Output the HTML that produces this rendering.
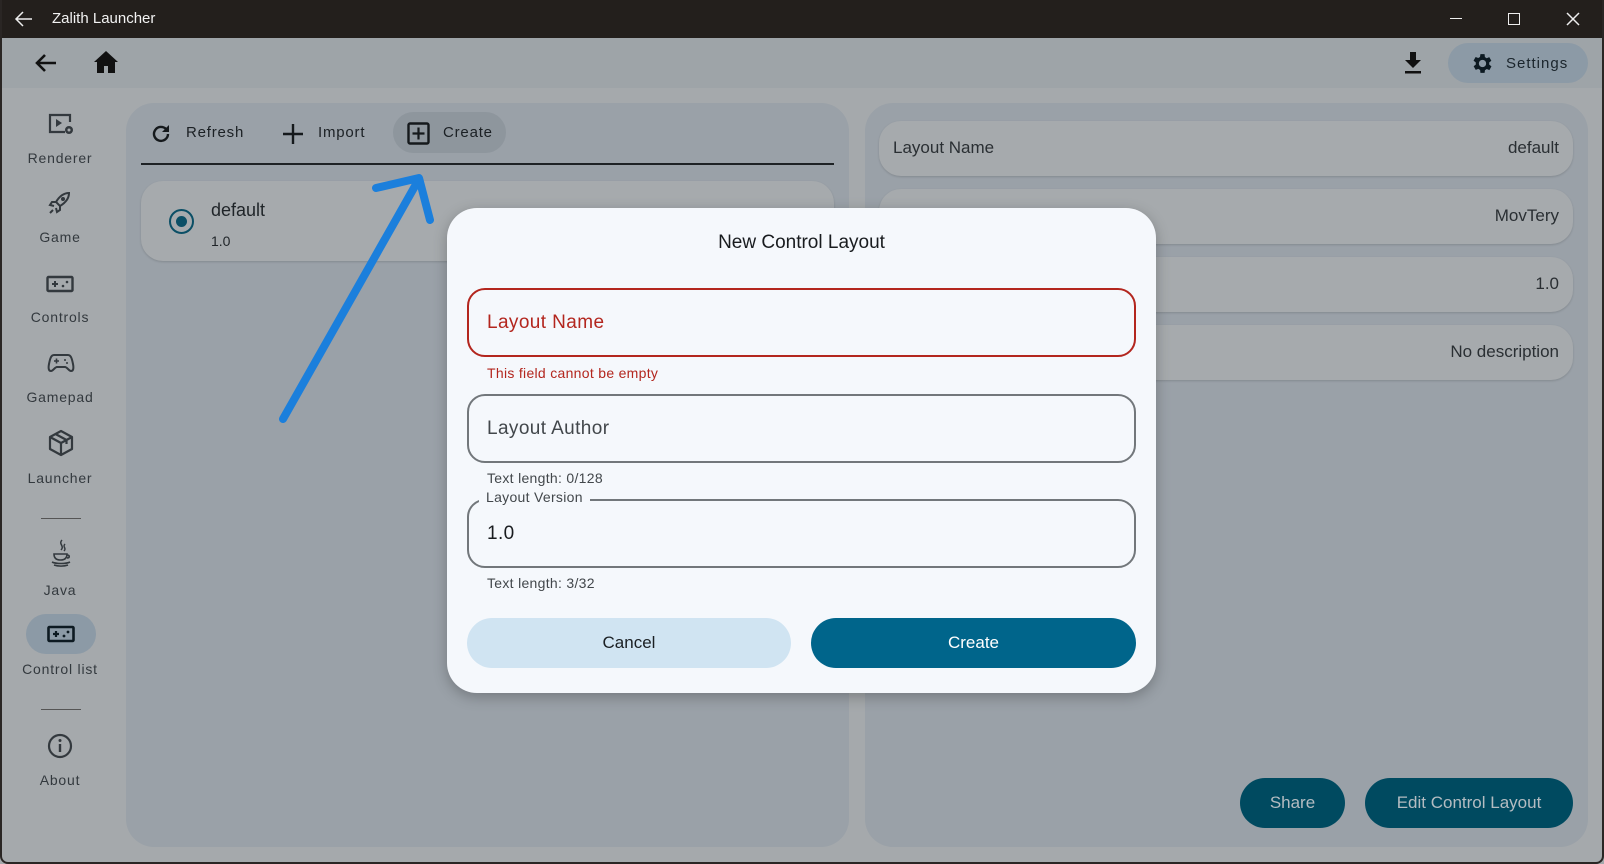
<!DOCTYPE html>
<html><head><meta charset="utf-8"><style>
*{box-sizing:border-box;margin:0;padding:0}
body{width:1604px;height:864px;overflow:hidden;background:#a5a9ac;font-family:"Liberation Sans",sans-serif;position:relative;color:#2a2f33}
.abs{position:absolute}
.title{left:0;top:0;width:1604px;height:38px;background:#231f1c;color:#f2f2f2;font-size:15px}
.topbar{left:0;top:38px;width:1604px;height:50px;background:#9ea4a8}
.nav{width:100px;left:10px;text-align:center;font-size:14px;letter-spacing:.8px;color:#33393e}
.panel{background:#9aa1a8;border-radius:28px}
.row{left:879px;width:694px;height:55px;background:#a6aaad;border-radius:22px;box-shadow:0 1px 2px rgba(0,0,0,.15);font-size:17px;color:#2a2f33}
.row span{position:absolute;right:14px;top:17px}
.dlg{left:447px;top:208px;width:709px;height:485px;background:#f5f8fc;border-radius:30px;box-shadow:0 4px 14px rgba(0,0,0,.25)}
.field{position:absolute;left:20px;width:669px;height:69px;border:2px solid #72777b;border-radius:18px;font-size:19px;color:#42474b;padding:22px 0 0 18px;letter-spacing:.4px}
.help{position:absolute;left:40px;font-size:14px;color:#42474b;letter-spacing:.3px}
.btn{position:absolute;height:50px;border-radius:25px;text-align:center;line-height:50px;font-size:17px}
.frame{left:0;top:0;width:1604px;height:864px;border:2px solid #2a2624;border-top:none;border-radius:0 0 8px 8px;pointer-events:none}
</style></head><body>
<div class="abs title">
<svg class="abs" style="left:14px;top:10px" width="20" height="18" viewBox="0 0 20 18"><path d="M18 9H3M9 2L2 9l7 7" stroke="#eee" stroke-width="1.5" fill="none"/></svg>
<div class="abs" style="left:52px;top:10px">Zalith Launcher</div>
<div class="abs" style="left:1450px;top:18px;width:12px;height:1px;background:#eee"></div>
<div class="abs" style="left:1508px;top:13px;width:12px;height:12px;border:1.5px solid #eee"></div>
<svg class="abs" style="left:1566px;top:12px" width="14" height="14"><path d="M1 1L13 13M13 1L1 13" stroke="#eee" stroke-width="1.5"/></svg>
</div>
<div class="abs topbar">
<svg class="abs" style="left:34px;top:14px" width="24" height="22" viewBox="0 0 24 22"><path d="M22 11H4M11 3L3 11l8 8" stroke="#111" stroke-width="2.6" fill="none"/></svg>
<svg class="abs" style="left:93px;top:12px" width="26" height="24" viewBox="0 0 26 24"><path d="M13 1L1 12h3v11h7v-7h4v7h7V12h3z" fill="#111"/></svg>
<svg class="abs" style="left:1402px;top:13px" width="22" height="24" viewBox="0 0 22 24"><path d="M8 1h6v8h5l-8 8-8-8h5z" fill="#111"/><rect x="3" y="20" width="16" height="2.5" fill="#111"/></svg>
<div class="abs" style="left:1448px;top:5px;width:140px;height:40px;background:#8c9aa6;border-radius:20px">
<svg class="abs" style="left:22px;top:8px" width="25" height="25" viewBox="0 0 24 24"><path fill="#0d1a22" d="M19.4 13a7.5 7.5 0 000-2l2.1-1.6-2-3.5-2.5 1a7 7 0 00-1.7-1L15 3h-4l-.4 2.7a7 7 0 00-1.7 1l-2.5-1-2 3.5L6.6 11a7.5 7.5 0 000 2l-2.1 1.6 2 3.5 2.5-1a7 7 0 001.7 1L11 21h4l.4-2.7a7 7 0 001.7-1l2.5 1 2-3.5zM13 15.5a3.5 3.5 0 110-7 3.5 3.5 0 010 7z" transform="translate(-1 0)"/></svg>
<div class="abs" style="left:58px;top:12px;font-size:15px;letter-spacing:1px;color:#1b252c">Settings</div>
</div>
</div>

<svg class="abs" style="left:47px;top:112px" width="28" height="26" viewBox="0 0 28 26"><path d="M18 20H3V3h20v7" stroke="#33393e" stroke-width="2.2" fill="none"/><path d="M9 7v8l6-4z" fill="#33393e"/><circle cx="22" cy="18" r="4" fill="#33393e"/><circle cx="22" cy="18" r="1.5" fill="#a5a9ac"/></svg>
<div class="abs nav" style="top:150px">Renderer</div>
<svg class="abs" style="left:47px;top:190px" width="26" height="26" viewBox="0 0 26 26"><path d="M22 3c-6 0-10 4-13 9l4 4c5-3 9-7 9-13zM9 12l-4 0-2 3 4 1M13 16v4l-3 2-1-4M6 20l-3 3" stroke="#33393e" stroke-width="2" fill="none"/><circle cx="16" cy="9" r="2" fill="#33393e"/></svg>
<div class="abs nav" style="top:229px">Game</div>
<svg class="abs" style="left:46px;top:275px" width="28" height="18" viewBox="0 0 28 18"><rect x="1.5" y="2" width="25" height="14" rx="1" stroke="#33393e" stroke-width="2.4" fill="none"/><path d="M6 9h6M9 6v6" stroke="#33393e" stroke-width="2"/><circle cx="17" cy="11" r="1.3" fill="#33393e"/><circle cx="21" cy="7" r="1.3" fill="#33393e"/></svg>
<div class="abs nav" style="top:309px">Controls</div>
<svg class="abs" style="left:47px;top:352px" width="28" height="22" viewBox="0 0 28 22"><path d="M7 3h14c3 0 4 4 5 9s0 7-2 7-4-4-6-4h-8c-2 0-4 4-6 4s-3-2-2-7 2-9 5-9z" stroke="#33393e" stroke-width="2" fill="none"/><path d="M7 9h5M9.5 6.5v5" stroke="#33393e" stroke-width="1.6"/><circle cx="18" cy="8" r="1" fill="#33393e"/><circle cx="20" cy="11" r="1" fill="#33393e"/></svg>
<div class="abs nav" style="top:389px">Gamepad</div>
<svg class="abs" style="left:47px;top:429px" width="28" height="28" viewBox="0 0 28 28"><path d="M14 2l11 6v12l-11 6-11-6V8zM3 8l11 6 11-6M14 14v12M8.5 5l11 6v4" stroke="#33393e" stroke-width="2.2" fill="none" stroke-linejoin="round"/></svg>
<div class="abs nav" style="top:470px">Launcher</div>
<div class="abs" style="left:41px;top:518px;width:40px;height:1px;background:#555"></div>
<svg class="abs" style="left:49px;top:539px" width="24" height="30" viewBox="0 0 24 30"><path d="M13 1c-4 4 3 6-1 10M16 5c-3 3 2 4-1 7" stroke="#33393e" stroke-width="1.5" fill="none"/><path d="M5 15h13c0 4-2 6-6.5 6S5 19 5 15zM18 16c3 0 3 3 0 3M3 23c4 2 14 2 18 0M5 26c4 1.5 10 1.5 14 0" stroke="#33393e" stroke-width="1.6" fill="none"/></svg>
<div class="abs nav" style="top:582px">Java</div>
<div class="abs" style="left:26px;top:614px;width:70px;height:40px;background:#8c9aa6;border-radius:20px"></div>
<svg class="abs" style="left:47px;top:625px" width="28" height="18" viewBox="0 0 28 18"><rect x="1.5" y="2" width="25" height="14" rx="1" stroke="#0d1a22" stroke-width="2.6" fill="none"/><path d="M6 9h6M9 6v6" stroke="#0d1a22" stroke-width="2.2"/><circle cx="17" cy="11" r="1.4" fill="#0d1a22"/><circle cx="21" cy="7" r="1.4" fill="#0d1a22"/></svg>
<div class="abs nav" style="top:661px;left:8px;width:104px">Control list</div>
<div class="abs" style="left:41px;top:709px;width:40px;height:1px;background:#555"></div>
<svg class="abs" style="left:47px;top:733px" width="26" height="26" viewBox="0 0 26 26"><circle cx="13" cy="13" r="11" stroke="#33393e" stroke-width="2.2" fill="none"/><path d="M13 11v8" stroke="#33393e" stroke-width="2.4"/><circle cx="13" cy="7.5" r="1.5" fill="#33393e"/></svg>
<div class="abs nav" style="top:772px">About</div>

<div class="abs panel" style="left:126px;top:103px;width:723px;height:744px"></div>
<svg class="abs" style="left:149px;top:122px" width="24" height="24" viewBox="0 0 24 24"><path d="M19 12a7 7 0 11-2-5" stroke="#15191c" stroke-width="2.4" fill="none"/><path d="M20 3v7h-7z" fill="#15191c"/></svg>
<div class="abs" style="left:186px;top:124px;font-size:15px;letter-spacing:.8px;color:#1b2024">Refresh</div>
<svg class="abs" style="left:282px;top:123px" width="22" height="22"><path d="M11 1v20M1 11h20" stroke="#15191c" stroke-width="2.4"/></svg>
<div class="abs" style="left:318px;top:124px;font-size:15px;letter-spacing:.8px;color:#1b2024">Import</div>
<div class="abs" style="left:393px;top:112px;width:113px;height:41px;background:#8e969d;border-radius:21px"></div>
<svg class="abs" style="left:407px;top:122px" width="23" height="23" viewBox="0 0 23 23"><rect x="1.5" y="1.5" width="20" height="20" rx="1.5" stroke="#15191c" stroke-width="2.4" fill="none"/><path d="M11.5 5.5v12M5.5 11.5h12" stroke="#15191c" stroke-width="2.2"/></svg>
<div class="abs" style="left:443px;top:124px;font-size:15px;letter-spacing:.8px;color:#1b2024">Create</div>
<div class="abs" style="left:141px;top:163px;width:693px;height:2px;background:#1e2225"></div>
<div class="abs" style="left:141px;top:181px;width:693px;height:80px;background:#a6aaad;border-radius:22px;box-shadow:0 1px 2px rgba(0,0,0,.15)"></div>
<div class="abs" style="left:169px;top:209px;width:25px;height:25px;border:2.5px solid #0b4f66;border-radius:50%"></div>
<div class="abs" style="left:176px;top:216px;width:11px;height:11px;background:#0b4f66;border-radius:50%"></div>
<div class="abs" style="left:211px;top:200px;font-size:18px;color:#1f2428">default</div>
<div class="abs" style="left:211px;top:233px;font-size:14px;color:#1f2428">1.0</div>

<div class="abs panel" style="left:865px;top:103px;width:723px;height:744px"></div>
<div class="abs row" style="top:121px"><div class="abs" style="left:14px;top:17px">Layout Name</div><span>default</span></div>
<div class="abs row" style="top:189px"><span>MovTery</span></div>
<div class="abs row" style="top:257px"><span>1.0</span></div>
<div class="abs row" style="top:325px"><span>No description</span></div>
<div class="btn" style="left:1240px;top:778px;width:105px;background:#004a60;color:#b4bcc1">Share</div>
<div class="btn" style="left:1365px;top:778px;width:208px;background:#004a60;color:#b4bcc1">Edit Control Layout</div>

<svg class="abs" style="left:0;top:0" width="1604" height="864"><path d="M283 419L419 179M376 188L419 178L430 220" stroke="#1b7fdc" stroke-width="8" fill="none" stroke-linecap="round" stroke-linejoin="round"/></svg>

<div class="abs dlg">
<div class="abs" style="left:0;width:709px;top:24px;text-align:center;font-size:19px;color:#191c1f">New Control Layout</div>
<div class="field" style="top:80px;border-color:#b3261e;color:#b3261e">Layout Name</div>
<div class="help" style="top:157px;color:#b3261e">This field cannot be empty</div>
<div class="field" style="top:186px">Layout Author</div>
<div class="help" style="top:262px">Text length: 0/128</div>
<div class="field" style="top:291px;color:#191c1f">1.0</div>
<div class="abs" style="left:32px;top:281px;padding:0 7px;background:#f5f8fc;font-size:14px;color:#42474b;letter-spacing:.3px">Layout Version</div>
<div class="help" style="top:367px">Text length: 3/32</div>
<div class="btn" style="left:20px;top:410px;width:324px;background:#d0e4f2;color:#1a1f23">Cancel</div>
<div class="btn" style="left:364px;top:410px;width:325px;background:#00658b;color:#fff">Create</div>
</div>
<div class="abs frame"></div>
</body></html>
